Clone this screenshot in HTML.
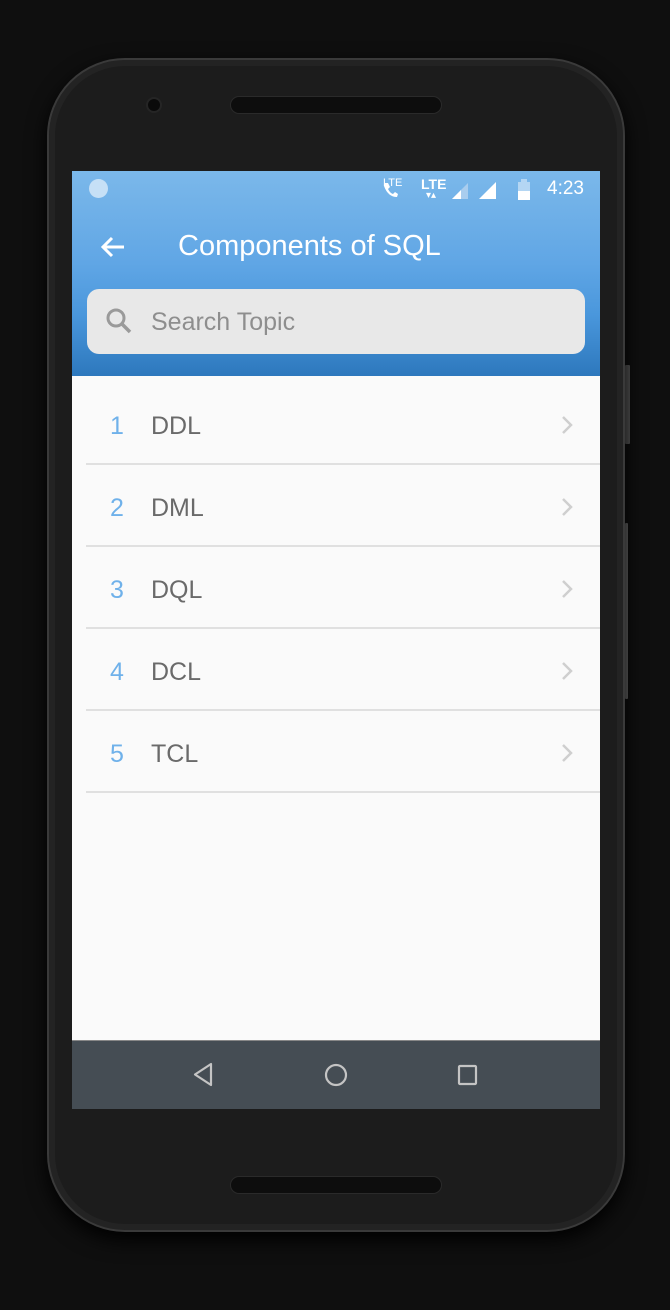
<!DOCTYPE html>
<html><head><meta charset="utf-8"><style>
*{margin:0;padding:0;box-sizing:border-box}
body{width:670px;height:1310px;background:#0f0f0f;position:relative;overflow:hidden;font-family:"Liberation Sans",sans-serif}
.phone{position:absolute;left:47px;top:58px;width:578px;height:1174px;border-radius:78px;background:#1c1c1c;border:2px solid #3a3a3a;box-shadow:inset 0 0 0 6px #232323,0 8px 20px #000}
.btn{position:absolute;left:625px;width:5px;background:#555;border-radius:1px}
.spk{position:absolute;left:230px;width:212px;height:18px;border-radius:9px;background:#0d0d0d;border:1px solid #2a2a2a}
.cam{position:absolute;left:146px;top:97px;width:16px;height:16px;border-radius:50%;background:#0a0a0a;border:2px solid #252525}
.screen{position:absolute;left:72px;top:171px;width:528px;height:938px;background:#fafafa;overflow:hidden}
.hdr{position:absolute;left:0;top:0;width:528px;height:205px;background:linear-gradient(#7bb8ea 0%,#60a6e5 45%,#4a97dc 70%,#2d78bd 100%)}
.sb{position:absolute;top:7px;color:#fff;font-size:19px}
.title{position:absolute;left:106px;top:59px;color:#fff;font-size:29px}
.search{position:absolute;left:15px;top:118px;width:498px;height:65px;border-radius:12px;background:#e8e8e8}
.search span{position:absolute;left:64px;top:19px;font-size:25px;color:#8e8e8e}
.row{position:absolute;left:0;width:528px;height:82px}
.row .n{position:absolute;left:38px;top:29px;font-size:25px;color:#6fb1ea}
.row .t{position:absolute;left:79px;top:29px;font-size:25px;color:#6a6a6a}
.row .line{position:absolute;left:14px;right:0;bottom:0;height:2px;background:#e0e0e0}
.row svg{position:absolute;left:488px;top:32px}
.nav{position:absolute;left:0;top:869px;width:528px;height:69px;background:#454d54;border-top:1px solid #888}
</style></head><body>
<div class="btn" style="top:365px;height:79px"></div>
<div class="btn" style="top:523px;height:176px;width:3px;background:#666"></div>
<div class="phone"></div>
<div class="spk" style="top:96px"></div>
<div class="spk" style="top:1176px"></div>
<div class="cam"></div>
<div class="screen">
 <div class="hdr">
  <div style="position:absolute;left:17px;top:8px;width:19px;height:19px;border-radius:50%;background:#c6e0f6"></div>
  <div class="sb" style="left:311px;font-size:11px;top:6px">LTE</div>
  <svg style="position:absolute;left:310px;top:10px" width="16" height="18"><path d="M3 2 L6 2 L8 6 L6 8 Q8 12 11 13 L13 11 L16 13 L15 16 Q6 16 2 5Z" fill="#fff"/></svg>
  <div class="sb" style="left:349px;font-size:14px;top:5px;font-weight:bold">LTE</div>
  <div class="sb" style="left:354px;font-size:10px;top:19px">▾▴</div>
  <svg style="position:absolute;left:380px;top:10px" width="20" height="18"><path d="M0 18 L16 2 V18Z" fill="#a9cdee"/><path d="M0 18 L9 9 V18Z" fill="#fff"/></svg>
  <svg style="position:absolute;left:406px;top:10px" width="20" height="18"><path d="M1 18 L18 1 V18Z" fill="#fff"/></svg>
  <svg style="position:absolute;left:446px;top:8px" width="14" height="22"><rect x="3" y="0" width="6" height="3" fill="#b4d6f3"/><rect x="0" y="3" width="12" height="18" fill="#b4d6f3"/><rect x="0" y="12" width="12" height="9" fill="#fff"/></svg>
  <div class="sb" style="left:475px;top:7px;font-size:19px">4:23</div>
  <svg style="position:absolute;left:28px;top:64px" width="26" height="24"><path d="M24 12 H3 M12 3 L3 12 L12 21" stroke="#fff" stroke-width="3" fill="none"/></svg>
  <div class="title">Components of SQL</div>
  <div class="search"><svg style="position:absolute;left:18px;top:18px" width="28" height="28"><circle cx="11" cy="11" r="8" stroke="#9a9a9a" stroke-width="3" fill="none"/><path d="M17 17 L25 25" stroke="#9a9a9a" stroke-width="3.5"/></svg><span>Search Topic</span></div>
 </div>
 <div class="row" style="top:212px"><span class="n">1</span><span class="t">DDL</span><svg width="14" height="20"><path d="M3 2 L11 10 L3 18" stroke="#cfcfcf" stroke-width="2.5" fill="none"/></svg><div class="line"></div></div>
 <div class="row" style="top:294px"><span class="n">2</span><span class="t">DML</span><svg width="14" height="20"><path d="M3 2 L11 10 L3 18" stroke="#cfcfcf" stroke-width="2.5" fill="none"/></svg><div class="line"></div></div>
 <div class="row" style="top:376px"><span class="n">3</span><span class="t">DQL</span><svg width="14" height="20"><path d="M3 2 L11 10 L3 18" stroke="#cfcfcf" stroke-width="2.5" fill="none"/></svg><div class="line"></div></div>
 <div class="row" style="top:458px"><span class="n">4</span><span class="t">DCL</span><svg width="14" height="20"><path d="M3 2 L11 10 L3 18" stroke="#cfcfcf" stroke-width="2.5" fill="none"/></svg><div class="line"></div></div>
 <div class="row" style="top:540px"><span class="n">5</span><span class="t">TCL</span><svg width="14" height="20"><path d="M3 2 L11 10 L3 18" stroke="#cfcfcf" stroke-width="2.5" fill="none"/></svg><div class="line"></div></div>
 <div class="nav">
  <svg style="position:absolute;left:120px;top:21px" width="24" height="26"><path d="M19 2 V23 L3 12.5Z" stroke="#c4c4c4" stroke-width="2.2" fill="none" stroke-linejoin="round"/></svg>
  <svg style="position:absolute;left:251px;top:21px" width="26" height="26"><circle cx="13" cy="13" r="10" stroke="#c4c4c4" stroke-width="2.2" fill="none"/></svg>
  <svg style="position:absolute;left:384px;top:22px" width="24" height="24"><rect x="3" y="3" width="17" height="18" stroke="#c4c4c4" stroke-width="2.2" fill="none" rx="1"/></svg>
 </div>
</div>
</body></html>
